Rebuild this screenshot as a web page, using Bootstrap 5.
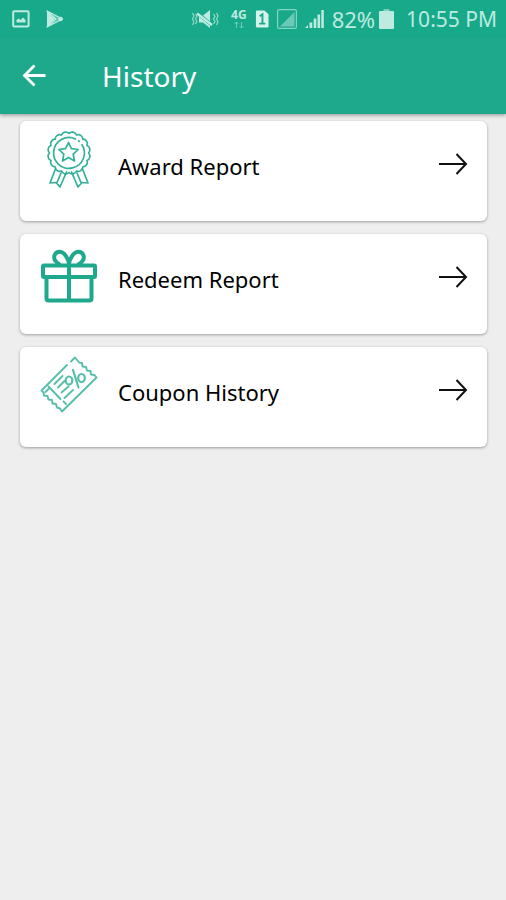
<!DOCTYPE html>
<html lang="en">
<head>
<meta charset="utf-8">
<meta name="viewport" content="width=device-width, initial-scale=1">
<title>History</title>
<link href="https://cdn.jsdelivr.net/npm/bootstrap@5.3.0/dist/css/bootstrap.min.css" rel="stylesheet">
<style>
  :root { --brand: #1ea98d; }
  body { background: #eee; font-family: "Noto Sans", "Open Sans", sans-serif; color: #000; }
  .app-top { background: var(--brand); box-shadow: 0 1px 4px rgba(0,0,0,.4); }
  .status { height: 38px; padding: 0 9px 0 12px; background: #18a98b; color: #bdebe0; font-size: 21px; line-height: 38px; }
  .tray { gap: 8px; }
  .charge { font-size: 22px; }
  .net { font-size: 12px; line-height: 12px; font-weight: 700; }
  .toolbar { height: 76px; padding-left: 20px; gap: 53px; }
  .toolbar h1 { font-size: 28px; line-height: 36px; font-weight: 400; }
  .back { line-height: 0; }
  .reports { padding: 7px 19px 16px 20px; gap: 13px; }
  .report { height: 100px; padding: 8px 19px 0 19px; border: 0; border-radius: 6px; box-shadow: 0 1px 3px rgba(0,0,0,.35); color: #000; }
  .report .label { font-size: 22px; line-height: 30px; margin: 22px 0 0 19px; }
  .go { margin-top: 23px; }
  .line { fill: none; stroke: var(--brand); stroke-linecap: round; stroke-linejoin: round; }
</style>
</head>
<body class="min-vh-100">
<header class="app-top position-relative text-white">
  <div class="status d-flex align-items-center justify-content-between">
    <div class="d-flex gap-3">
      <svg width="18" height="18" viewBox="0 0 18 18" aria-hidden="true"><rect x="1.200" y="1.200" width="15.400" height="15.400" rx="1" fill="none" stroke="currentColor" stroke-width="2"/><path d="M4.500 12.500V10l2-1.500 2 1.500 2.500-2.500 2.500 2.500v2.500z" fill="currentColor"/></svg>
      <svg width="18" height="18" viewBox="0 0 18 18" aria-hidden="true"><path d="M1 1v16l8-8z" fill="currentColor"/><path d="M1 1l15.500 8L1 17l9-8z" fill="currentColor" fill-opacity=".4" stroke="currentColor" stroke-width="1.300" stroke-linejoin="round"/><circle cx="14.500" cy="9" r="2.300" fill="currentColor"/></svg>
    </div>
    <div class="tray d-flex align-items-center">
      <svg class="me-1" width="28" height="20" viewBox="0 0 28 20" aria-hidden="true"><path d="M8 6.500h4L19 1v18l-7-5.500H8z" fill="currentColor"/><path d="M5 3l17 14" stroke="#18a98b" stroke-width="3.500"/><path d="M6 4.500L21 16" stroke="currentColor" stroke-width="2.500"/><path d="M4.500 5L6 7.500 4.500 10 6 12.500 4.500 15M1.500 4L3 7 1.500 10 3 13l-1.500 3M22.500 5L24 7.500 22.500 10l1.500 2.500-1.500 2.500M25.500 4L27 7l-1.500 3 1.500 3-1.500 3" fill="none" stroke="currentColor" stroke-opacity=".75" stroke-width="1.200"/></svg>
      <div class="net d-flex flex-column align-items-center">
        <span>4G</span>
        <svg width="12" height="8" viewBox="0 0 12 8" aria-hidden="true"><path d="M3.500 7V1M1.500 3l2-2 2 2M8.500 1v6M6.500 5l2 2 2-2" fill="none" stroke="currentColor" stroke-opacity=".5"/></svg>
      </div>
      <svg width="14" height="20" viewBox="0 0 15 20" aria-hidden="true"><path d="M2 1h8l4.500 4v13a1 1 0 0 1-1 1H2a1 1 0 0 1-1-1V2a1 1 0 0 1 1-1z" fill="#d5f3eb"/><path d="M5 7l3-2v10M4.500 15H11" fill="none" stroke="#18a98b" stroke-width="2"/></svg>
      <svg width="20" height="20" viewBox="0 0 20 20" aria-hidden="true"><rect x=".6" y=".6" width="18.800" height="18.800" rx="1.500" fill="none" stroke="currentColor" stroke-opacity=".65" stroke-width="1.200"/><path d="M17.500 3v14.500H3z" fill="currentColor" fill-opacity=".5"/></svg>
      <svg width="19" height="20" viewBox="0 0 19 20" aria-hidden="true"><path d="M0 19l3-3v3zM4.500 13.500h2.800V19H4.500zM8.700 9.500h2.600V19H8.700zM12.500 5.500h2.600V19h-2.600zM16.300 1h2.500v18h-2.500z" fill="currentColor"/></svg>
      <div class="charge d-flex align-items-center gap-1">
        <span>82%</span>
        <svg width="15" height="20" viewBox="0 0 15 20" aria-hidden="true"><path d="M4.500 0h6v2h-6z" fill="currentColor" fill-opacity=".6"/><rect y="2" width="15" height="18" rx="1" fill="currentColor"/></svg>
      </div>
      <span class="ps-1">10:55 PM</span>
    </div>
  </div>
  <div class="toolbar d-flex align-items-center">
    <button type="button" class="back btn p-0 border-0 text-white" aria-label="Back">
      <svg width="29" height="28" viewBox="0 0 29 28" aria-hidden="true"><path d="M25.500 13.500H5M14.500 3.500l-10 10 10 10" fill="none" stroke="currentColor" stroke-width="2.800"/></svg>
    </button>
    <h1 class="m-0">History</h1>
  </div>
</header>

<main class="reports d-flex flex-column">
  <a href="#award" class="report card flex-row align-items-start text-decoration-none">
    <svg class="line flex-shrink-0" width="60" height="64" viewBox="0 0 60 64" stroke-width="1.700" stroke-opacity=".9" aria-hidden="true">
      <path d="M49.500 24A4.500 4.500 0 0 1 48 31.500A4.500 4.500 0 0 1 43.800 37.800A4.500 4.500 0 0 1 37.500 42A4.500 4.500 0 0 1 30 43.500A4.500 4.500 0 0 1 22.500 42A4.500 4.500 0 0 1 16.200 37.800A4.500 4.500 0 0 1 12 31.500A4.500 4.500 0 0 1 10.500 24A4.500 4.500 0 0 1 12 16.500A4.500 4.500 0 0 1 16.200 10.200A4.500 4.500 0 0 1 22.500 6A4.500 4.500 0 0 1 30 4.500A4.500 4.500 0 0 1 37.500 6A4.500 4.500 0 0 1 43.800 10.200A4.500 4.500 0 0 1 48 16.500A4.500 4.500 0 0 1 49.500 24z"/>
      <path d="M36.500 10A15.400 15.400 0 1 0 43 15.700M39.500 11.800l.8.600"/>
      <path d="M29.500 13.500l2.900 6.200 6.800.8-5 4.700 1.300 6.800-6-3.400-6 3.400 1.300-6.800-5-4.700 6.800-.8z"/>
      <path d="M16.500 40L11 54l6-.5 4 4.500 6.500-15M43.500 40L49 54l-6-.5-4 4.500-6.500-15M22 44l-4 9.500M38 44l4 9.500"/>
    </svg>
    <span class="label">Award Report</span>
    <svg class="go ms-auto" width="30" height="24" viewBox="0 0 30 24" aria-hidden="true"><path d="M1 12h27M18.500 2L28 12l-9.500 10" fill="none" stroke="#111" stroke-width="2"/></svg>
  </a>
  <a href="#redeem" class="report card flex-row align-items-start text-decoration-none">
    <svg class="line flex-shrink-0" width="60" height="64" viewBox="0 0 60 64" stroke-width="4" aria-hidden="true">
      <rect x="4" y="23.500" width="52" height="11.500" rx="1"/>
      <path d="M7.500 35v21.500a2 2 0 0 0 2 2h41a2 2 0 0 0 2-2V35M30 23v35M30 22c-.5-5-4.500-12-9-12.200C16 9.600 13.500 15 16.500 19c1 1.500 2.500 2.500 4 3.500M30 22c.5-5 4.500-12 9-12.200 5-.2 7.500 5.200 4.500 9.200-1 1.500-2.500 2.500-4 3.500"/>
    </svg>
    <span class="label">Redeem Report</span>
    <svg class="go ms-auto" width="30" height="24" viewBox="0 0 30 24" aria-hidden="true"><path d="M1 12h27M18.500 2L28 12l-9.500 10" fill="none" stroke="#111" stroke-width="2"/></svg>
  </a>
  <a href="#coupon" class="report card flex-row align-items-start text-decoration-none">
    <svg class="line flex-shrink-0" width="60" height="64" viewBox="0 0 60 64" stroke-width="1.900" stroke-opacity=".75" aria-hidden="true">
      <path d="M28 10L2.500 35.500l2 2 .5 3 3.500.5 1 3.500 3.500.5.500 3.500 3.500.5 1 3.500 3 1 2 3L57.500 22.500l-2-2.500-3.500-.5-.5-3.500-3.500-.5-1-3.500-3.500-.5-.5-3.500-3-.5L36 2.500l-4 4"/>
      <path d="M9.500 31.500l12 12.500M24.500 46.500l2.500 2.500"/>
      <path d="M15.500 29l8-8M19 32.500l6.500-6.500M22.500 37.500l7-6M25.500 43l8.500-8M6.500 37l3-3"/>
      <g stroke-width="2.200"><ellipse cx="30" cy="25.500" rx="3.300" ry="4"/><ellipse cx="42.500" cy="23" rx="3.300" ry="4"/><path d="M34 15l5.500 17.500"/></g>
    </svg>
    <span class="label">Coupon History</span>
    <svg class="go ms-auto" width="30" height="24" viewBox="0 0 30 24" aria-hidden="true"><path d="M1 12h27M18.500 2L28 12l-9.500 10" fill="none" stroke="#111" stroke-width="2"/></svg>
  </a>
</main>
<script src="https://cdn.jsdelivr.net/npm/bootstrap@5.3.0/dist/js/bootstrap.bundle.min.js"></script>
</body>
</html>
